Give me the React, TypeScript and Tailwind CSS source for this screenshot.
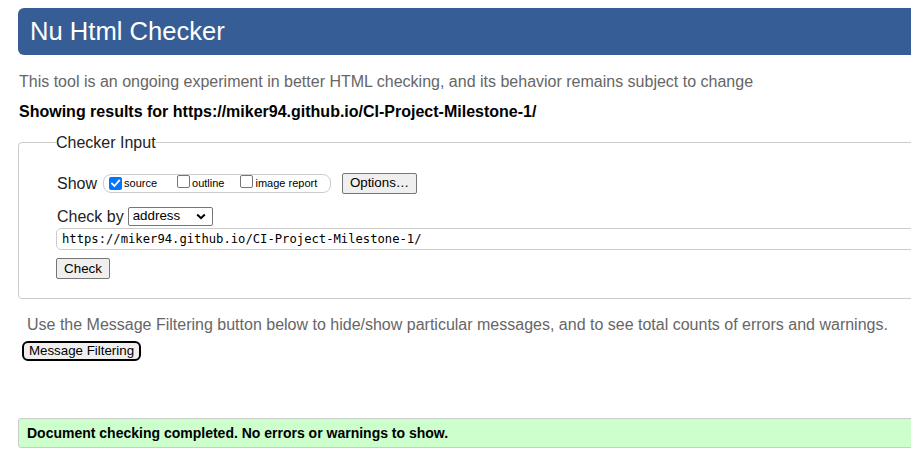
import React from "react";

function Box({ checked }: { checked?: boolean }) {
  if (checked) {
    return (
      <span className="inline-flex h-[13px] w-[13px] items-center justify-center rounded-[2px] bg-[#0075ff]">
        <svg width="11" height="11" viewBox="0 0 11 11">
          <path d="M2 5.6 L4.4 8 L9.2 2.6" fill="none" stroke="white" strokeWidth="1.8" strokeLinecap="square" />
        </svg>
      </span>
    );
  }
  return <span className="inline-block h-[13px] w-[13px] rounded-[2px] border border-[#767676] bg-white" />;
}

export default function App() {
  return (
    <div className="h-[460px] w-[911px] overflow-hidden bg-white" style={{ fontFamily: '"Liberation Sans", Arial, sans-serif' }}>
      <div className="w-[1100px] pt-[8px]">
        <div className="ml-[18px] flex h-[47px] items-center rounded-l-[6px] bg-[#365d95] pl-[12px]">
          <h1 className="text-[25.6px] leading-none text-white">Nu Html Checker</h1>
        </div>
        <p className="ml-[19px] mt-[17px] text-[16px] leading-[19px] text-[#666]">
          This tool is an ongoing experiment in better HTML checking, and its behavior remains subject to change
        </p>
        <p className="ml-[19px] mt-[11px] text-[16px] font-bold leading-[19px] text-black">
          Showing results for https://miker94.github.io/CI-Project-Milestone-1/
        </p>
        <fieldset className="ml-[18px] mt-[12px] rounded-l-[4px] border border-[#ccc] pb-[19px] pl-[38px]">
          <legend className="ml-[-1px] px-0 text-[16px] leading-[19px] text-[#222]">Checker Input</legend>
          <div className="mt-[21px] flex h-[20px] items-center">
            <span className="text-[16px] leading-[19px] text-[#222]">Show</span>
            <div className="ml-[6px] flex h-[19px] w-[228px] items-center rounded-[8px] border border-[#ccc] pl-[5px]">
              <Box checked />
              <span className="ml-[2px] text-[11px] leading-none text-black">source</span>
              <span className="ml-[20px]"><Box /></span>
              <span className="ml-[2px] text-[11px] leading-none text-black">outline</span>
              <span className="ml-[16px]"><Box /></span>
              <span className="ml-[2px] text-[11px] leading-none text-black">image report</span>
            </div>
            <button className="ml-[11px] flex h-[21px] w-[75px] items-center justify-center rounded-[2px] border border-[#767676] bg-[#efefef] text-[13.33px] leading-none text-black">
              Options…
            </button>
          </div>
          <div className="mt-[13px] flex h-[20px] items-center">
            <span className="text-[16px] leading-[19px] text-[#222]">Check by</span>
            <div className="ml-[4px] flex h-[19px] w-[85px] items-center justify-between rounded-[2px] border border-[#767676] bg-white pl-[4px] pr-[6px]">
              <span className="text-[13.33px] leading-none text-black">address</span>
              <svg width="10" height="7" viewBox="0 0 10 7">
                <path d="M1.2 1.5 L5 5.2 L8.8 1.5" fill="none" stroke="black" strokeWidth="2" />
              </svg>
            </div>
          </div>
          <div className="ml-[-1px] mt-[2px] flex h-[22px] items-center rounded-l-[5px] border border-[#ccc] pl-[5px]">
            <span className="text-[12.2px] leading-none text-black" style={{ fontFamily: '"DejaVu Sans Mono", "Liberation Mono", monospace' }}>
              https://miker94.github.io/CI-Project-Milestone-1/
            </span>
          </div>
          <button className="ml-[-1px] mt-[8px] flex h-[21px] w-[54px] items-center justify-center rounded-[2px] border border-[#767676] bg-[#efefef] text-[13.33px] leading-none text-black">
            Check
          </button>
        </fieldset>
        <p className="ml-[27px] mt-[16px] text-[16px] leading-[19px] text-[#666]">
          Use the Message Filtering button below to hide/show particular messages, and to see total counts of errors and warnings.
        </p>
        <button className="ml-[22px] mt-[7px] flex h-[20px] w-[119px] items-center justify-center rounded-[6px] border-2 border-black bg-[#efefef] text-[13.33px] leading-none text-black">
          Message Filtering
        </button>
        <div className="ml-[18px] mt-[57px] flex h-[30px] items-center rounded-l-[3px] border border-[#ccc] bg-[#ccffcc] pl-[8px]">
          <span className="text-[14px] font-bold leading-none text-black">Document checking completed. No errors or warnings to show.</span>
        </div>
      </div>
    </div>
  );
}
